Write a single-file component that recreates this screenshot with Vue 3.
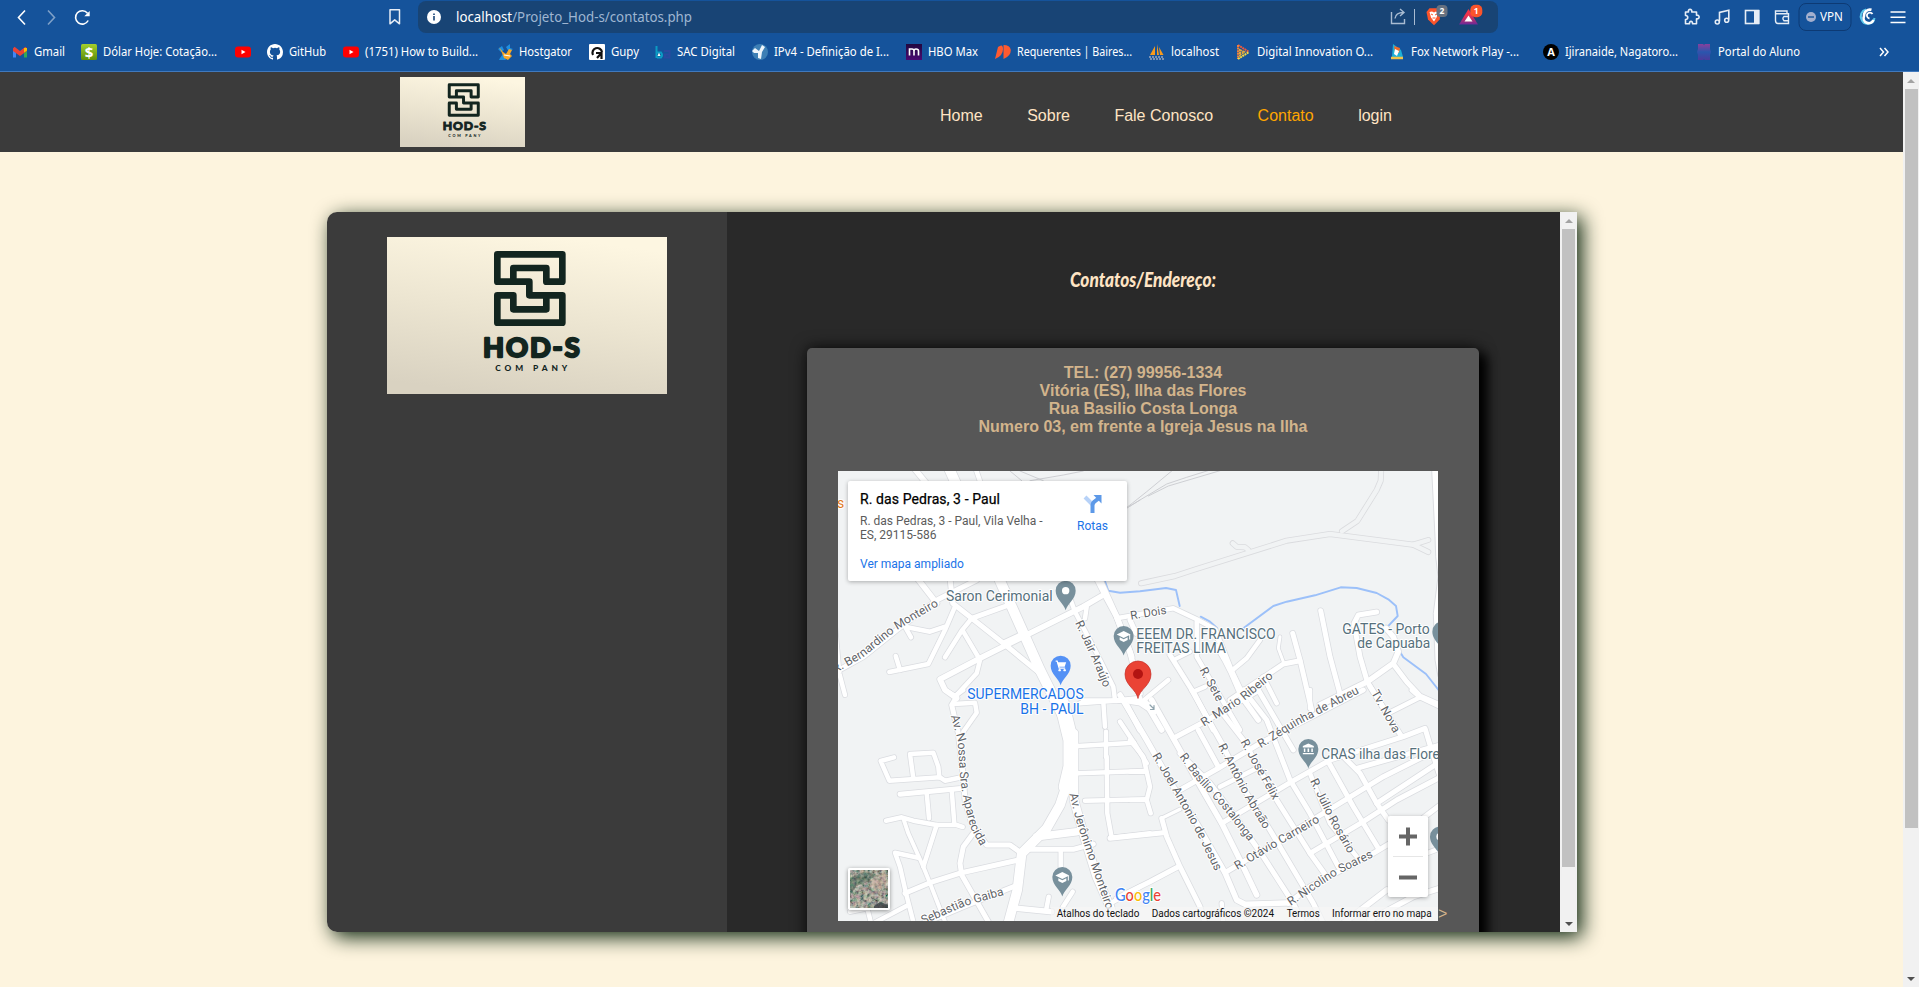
<script setup>
const bookmarks = [
  { icon: 'gmail', label: 'Gmail', w: 31, gap: 16 },
  { icon: 'dollar', label: 'Dólar Hoje: Cotação...', w: 114, gap: 18 },
  { icon: 'youtube', label: '', w: 0, gap: 16 },
  { icon: 'github', label: 'GitHub', w: 37, gap: 17 },
  { icon: 'youtube', label: '(1751) How to Build...', w: 113, gap: 19 },
  { icon: 'gator', label: 'Hostgator', w: 53, gap: 17 },
  { icon: 'gupy', label: 'Gupy', w: 28, gap: 16 },
  { icon: 'ba', label: 'SAC Digital', w: 58, gap: 17 },
  { icon: 'globe', label: 'IPv4 - Definição de I...', w: 115, gap: 17 },
  { icon: 'hbo', label: 'HBO Max', w: 50, gap: 17 },
  { icon: 'baires', label: 'Requerentes | Baires...', w: 115, gap: 17 },
  { icon: 'pma', label: 'localhost', w: 48, gap: 16 },
  { icon: 'dio', label: 'Digital Innovation O...', w: 116, gap: 16 },
  { icon: 'fox', label: 'Fox Network Play -...', w: 108, gap: 24 },
  { icon: 'aletter', label: 'Ijiranaide, Nagatoro...', w: 113, gap: 18 },
  { icon: 'portal', label: 'Portal do Aluno', w: 82, gap: 0 },
]

const nav = ['Home', 'Sobre', 'Fale Conosco', 'Contato', 'login']

// Map tiles: each is drawn at triple resolution and offset inside the 600x450 frame.
const tiles = { nw: [-8, -11], ne: [292, -11], sw: [-8, 219], se: [292, 219], c: [242, 109] }

function points(tile, list) {
  const [ox, oy] = tiles[tile]
  const n = list.trim().split(/[\s,]+/).map(Number)
  const out = []
  for (let i = 0; i < n.length; i += 2) out.push([n[i] / 3 + ox, n[i + 1] / 3 + oy])
  return out
}
const toPath = (pts) => 'M' + pts.map((p) => p.map((v) => v.toFixed(1)).join(' ')).join('L')
function length(pts) {
  let s = 0
  for (let i = 1; i < pts.length; i++) s += Math.hypot(pts[i][0] - pts[i - 1][0], pts[i][1] - pts[i - 1][1])
  return s
}

const roads = [
  // north west
  ['nw', 9.5, '355,20 510,362 545,440 630,630 700,770'],
  ['nw', 5, '240,10 330,120'],
  ['nw', 4, '435,20 452,70'],
  ['nw', 5, '262,355 320,430'],
  ['nw', 4.5, '10,640 100,590 200,510 325,418 440,360'],
  ['nw', 4.5, '360,355 368,430 425,475 520,550 630,640'],
  ['nw', 4, '375,440 345,510 295,612 178,636'],
  ['nw', 4, '210,630 197,588'],
  ['nw', 4, '345,500 300,515 225,500 243,532'],
  ['nw', 4.5, '425,475 545,432'],
  ['nw', 4, '425,475 395,512 345,592'],
  ['nw', 4, '400,515 450,600 440,640 375,710'],
  ['nw', 5, '380,715 345,690 330,658 450,595 600,520 760,440 825,402'],
  ['nw', 4, '520,548 570,525'],
  ['nw', 5, '800,355 830,415 860,470 905,590'],
  ['nw', 4, '720,415 735,455 800,580 850,680 855,720'],
  ['nw', 4, '770,440 765,475'],
  ['nw', 4, '15,500 28,640 45,705'],
  // centre
  ['c', 5, '60,0 110,110 150,215 180,340'],
  ['c', 4, '0,370 100,362 170,358 205,372 225,395'],
  ['c', 4, '190,362 265,300'],
  ['c', 5, '195,365 245,450'],
  ['c', 4, '110,115 280,85 350,118 400,145 412,175'],
  ['c', 4.5, '150,120 168,160'],
  ['c', 4.5, '270,225 345,345 400,450'],
  ['c', 3.5, '285,238 330,215'],
  ['c', 4, '340,335 375,320'],
  ['c', 4, '350,125 350,230 480,450'],
  ['c', 5, '405,150 455,275 500,370'],
  ['c', 5, '140,375 180,450'],
  // north east
  ['ne', 5, '262,560 285,600 305,640 335,710 385,780'],
  ['ne', 4, '305,632 350,595 390,540'],
  ['ne', 4.5, '488,520 510,600 545,750'],
  ['ne', 4.5, '510,602 460,612 300,720'],
  ['ne', 2.5, '450,530 445,565 460,605'],
  ['ne', 4, '400,650 440,730'],
  ['ne', 4.5, '572,452 600,590 635,720'],
  ['ne', 4.5, '740,456 685,465 672,490 690,590 712,665 770,760'],
  ['ne', 5, '570,735 712,665 790,610 805,575 790,530 768,505'],
  ['ne', 4.5, '790,612 830,665 870,708 930,735'],
  // south west
  ['sw', 14, '695,40 722,150 722,230 708,290'],
  ['sw', 9, '715,270 690,345 650,415 575,490 562,600 535,700'],
  ['sw', 4.5, '380,20 365,45 385,130 400,260 405,330 425,400 470,465 540,465 578,492'],
  ['sw', 4, '345,0 375,18 400,0'],
  ['sw', 4, '370,42 435,38 440,68 400,125'],
  ['sw', 4, '192,202 152,213 178,272 330,262 345,272 395,262'],
  ['sw', 4, '250,265 240,192 310,188 325,230 328,262'],
  ['sw', 4.5, '210,313 400,295'],
  ['sw', 4, '290,310 297,385'],
  ['sw', 4, '365,300 373,400'],
  ['sw', 4, '168,392 215,382 250,392 320,405 380,405 398,411'],
  ['sw', 3.5, '220,385 235,430 280,530 300,580 345,695'],
  ['sw', 4, '320,405 280,530'],
  ['sw', 4, '265,503 195,488 210,530 228,610 250,695'],
  ['sw', 4.5, '225,610 300,578 395,548 575,508'],
  ['sw', 4, '130,700 235,645'],
  ['sw', 4, '60,665 112,655 122,695'],
  ['sw', 4.5, '430,430 400,470 390,520 395,555 475,695'],
  ['sw', 4.5, '270,705 400,650 550,590'],
  ['sw', 7, '620,440 740,425'],
  ['sw', 4.5, '590,478 730,478 790,462'],
  ['sw', 4, '692,480 692,535'],
  ['sw', 5, '560,655 665,665'],
  ['sw', 4, '648,662 656,620'],
  ['sw', 4, '698,652 728,605'],
  ['sw', 8, '732,130 732,330 760,430 800,560 840,650 855,700'],
  ['sw', 4, '745,168 912,158'],
  ['sw', 4, '745,250 945,243'],
  ['sw', 4, '765,332 950,328'],
  ['sw', 4, '820,35 825,110'],
  ['sw', 4, '828,125 828,200'],
  ['sw', 4, '830,200 832,370 845,443 960,430'],
  ['sw', 4.5, '760,32 860,32 930,25'],
  ['sw', 4, '870,95 912,158 950,220'],
  ['sw', 4, '850,635 930,590'],
  // south east
  ['se', 5, '-30,15 50,150 130,290 200,400 285,548 320,630 345,643 490,638'],
  ['se', 4, '0,35 30,40 60,60'],
  ['se', 5, '65,30 130,145 200,270 275,400 330,510 380,615'],
  ['se', 4.5, '205,120 265,230'],
  ['se', 4, '0,150 40,200 60,290 50,330 62,370'],
  ['se', 4, '0,245 45,245'],
  ['se', 4, '0,330 50,330'],
  ['se', 3, '95,385 150,358'],
  ['se', 4.5, '-60,445 100,428'],
  ['se', 4.5, '95,385 110,440 150,530 210,650 225,700'],
  ['se', 4.5, '-40,625 60,575 145,530'],
  ['se', 4, '275,640 280,700'],
  ['se', 4.5, '130,145 215,100 380,5'],
  ['se', 4.5, '185,0 275,160 350,310 420,420 550,640 580,700'],
  ['se', 4.5, '150,190 240,280 330,400 400,500 490,640 520,700'],
  ['se', 4.5, '270,60 340,150 440,330 540,490 590,560'],
  ['se', 4.5, '340,0 410,90 480,270 540,370 625,530'],
  ['se', 4.5, '385,0 490,180'],
  ['se', 4, '540,250 600,400 680,500'],
  ['se', 4.5, '595,215 670,350 745,475'],
  ['se', 4.5, '645,205 690,250 740,340 775,390'],
  ['se', 4.5, '150,300 265,235 390,160 700,0'],
  ['se', 4.5, '275,400 485,275 600,210 820,140 885,115 900,165 930,260'],
  ['se', 4, '270,290 380,235'],
  ['se', 4.5, '680,235 930,165'],
  ['se', 4.5, '285,548 450,450 580,370 760,260 930,175'],
  ['se', 4.5, '540,490 700,395 800,330 930,262'],
  ['se', 4.5, '740,340 930,215'],
  ['se', 4.5, '475,640 540,590 730,490 780,460 930,345'],
  ['se', 4.5, '720,-10 815,140'],
  ['se', 4, '775,70 870,22 930,50'],
  ['se', 4, '845,0 870,22'],
  ['se', 4, '540,0 540,55'],
  ['se', 5, '640,700 770,600'],
  ['se', 5, '720,690 850,620 930,595'],
  ['se', 4, '890,490 930,475'],
].map(([t, w, d]) => ({ w: w + 0.5, d: toPath(points(t, d)) }))

const tracks = [
  ['ne', '33,370 135,348 190,330 470,242 600,222 850,254 895,240'],
  ['ne', '850,254 895,276'],
  ['ne', '636,214 682,183 740,90 752,62 754,20'],
  ['ne', '355,270 345,262 320,260 308,250'],
].map(([t, d]) => toPath(points(t, d)))

const rails = [
  ['ne', '-40,165 0,135 50,95 125,33'],
  ['ne', '0,138 60,102 110,72 170,52 240,30'],
  ['ne', '55,108 115,78 270,32'],
  ['nw', '540,33 575,62'],
  ['nw', '570,33 640,62'],
  ['nw', '600,62 700,45 760,33'],
  ['nw', '890,145 930,120'],
].map(([t, d]) => toPath(points(t, d)))

const rivers = [
  ['nw', '822,355 835,392 870,398 930,394 1008,384 1038,390 1049,438'],
  ['ne', '212,470 240,485 262,505'],
  ['ne', '340,505 430,438 470,425 555,406 632,382 680,384 740,399 775,418 798,438 803,468 768,505'],
  ['ne', '810,575 820,592 888,642 930,695'],
].map(([t, d]) => toPath(points(t, d)))

const coast = toPath(points('ne', '905,30 915,230 917,290 924,350 910,460 915,600 924,650 940,650 940,30')) + 'Z'

const streets = [
  ['nw', 'R. Bernardino Monteiro', '16,640 100,592 200,510 328,436'],
  ['nw', 'R. Jair Araújo', '735,488 790,605 822,685'],
  ['c', 'R. Dois', '153,119 262,101'],
  ['c', 'R. Sete', '358,270 412,368'],
  ['se', 'R. Mario Ribeiro', '222,110 340,35 432,-40'],
  ['se', 'R. Zéquinha de Abreu', '392,175 500,108 690,8'],
  ['se', 'Tv. Nova', '723,8 792,132'],
  ['sw', 'Av. Nossa Sra. Aparecida', '362,78 383,150 390,260 400,330 422,415 453,470'],
  ['sw', 'Av. Jerônimo Monteiro', '718,312 740,400 778,510 830,662'],
  ['sw', 'Sebastião Gaiba', '280,703 400,650 524,614'],
  ['se', 'R. Joel Antonio de Jesus', '66,197 130,305 200,430 256,545'],
  ['se', 'R. Basílio Costalonga', '148,200 200,270 275,350 358,456'],
  ['se', 'R. Antônio Abraão', '264,168 340,315 403,420'],
  ['se', 'R. José Félix', '331,156 430,333'],
  ['se', 'R. Otávio Carneiro', '322,540 440,470 572,394'],
  ['se', 'R. Júlio Rosário', '540,273 600,395 656,493'],
  ['se', 'R. Nicolino Soares', '482,648 560,595 620,555 732,500'],
].map(([t, text, d], i) => {
  const p = points(t, d)
  return { id: 'street' + i, text, d: toPath(p), len: length(p) - 0.5 }
})

const places = [
  ['nw', 'Saron Cerimonial', 348, 423, 320, '#56707c'],
  ['ne', 'EEEM DR. FRANCISCO', 19, 537, 418, '#56707c'],
  ['ne', 'FREITAS LIMA', 19, 579, 269, '#56707c'],
  ['ne', 'GATES - Porto', 637, 522, 262, '#56707c'],
  ['ne', 'de Capuaba', 682, 564, 219, '#56707c'],
  ['nw', 'SUPERMERCADOS', 412, 718, 349, '#1a73e8'],
  ['sw', 'BH - PAUL', 571, 72, 190, '#1a73e8'],
  ['se', 'CRAS ilha das Flores', 574, 206, 376, '#56707c'],
].map(([t, text, x, y, w, color]) => {
  const [[px, py]] = points(t, `${x},${y}`)
  return { text, x: px, y: py, w: w / 3, color }
})

const pins = [
  ['nw', 707, 392, 'dot'],
  ['nw', 881, 528, 'cap'],
  ['nw', 692, 617, 'cart'],
  ['ne', 937, 515, 'dot'],
  ['se', 535, 177, 'museum'],
  ['sw', 697, 561, 'cap'],
  ['se', 930, 440, 'dot'],
].map(([t, x, y, kind]) => {
  const [[px, py]] = points(t, `${x},${y}`)
  return { x: px, y: py, kind }
})

const legal = [
  { text: 'Atalhos do teclado', x: 218.7, w: 82.6 },
  { text: 'Dados cartográficos ©2024', x: 313.7, w: 122.3 },
  { text: 'Termos', x: 448.7, w: 33 },
  { text: 'Informar erro no mapa', x: 494, w: 99.6 },
]
</script>

<template>
  <div class="window">
    <svg class="defs" width="0" height="0">
      <defs>
        <linearGradient id="paper" x1="0.6" y1="0" x2="0.35" y2="1">
          <stop offset="0" stop-color="#fdf6e1" />
          <stop offset="0.5" stop-color="#ece5d1" />
          <stop offset="1" stop-color="#d9d2c1" />
        </linearGradient>
        <symbol id="brand" viewBox="0 0 840 471" preserveAspectRatio="none">
          <rect width="840" height="471" fill="url(#paper)" />
          <g transform="translate(-201 -111)" fill="none" stroke="#12251f" stroke-width="20" stroke-linejoin="round">
            <path d="M580 245V204H679V245H727V163H532V245H628V286H727V368H532V286H580V328H679V286" />
          </g>
          <text x="288" y="360" font-family="Lato, sans-serif" font-weight="700" font-size="82" textLength="290" fill="#12251f" stroke="#12251f" stroke-width="7" stroke-linejoin="round">HOD-S</text>
          <text x="325" y="402" font-family="Lato, sans-serif" font-weight="900" font-size="25" textLength="216" fill="#12251f">COM PANY</text>
        </symbol>
        <linearGradient id="dollarBg" x1="0" y1="0" x2="0" y2="1">
          <stop offset="0" stop-color="#a4cf2c" /><stop offset="1" stop-color="#5d8e08" />
        </linearGradient>
        <linearGradient id="hboBg" x1="0" y1="0" x2="0" y2="1">
          <stop offset="0" stop-color="#21083f" /><stop offset="1" stop-color="#4a0a72" />
        </linearGradient>
        <linearGradient id="portalBg" x1="0" y1="0" x2="0" y2="1">
          <stop offset="0" stop-color="#8a3f9c" /><stop offset="0.5" stop-color="#2a56ae" /><stop offset="1" stop-color="#4a3a9c" />
        </linearGradient>
        <linearGradient id="batBg" x1="0" y1="0" x2="0" y2="1">
          <stop offset="0.4" stop-color="#f0334a" /><stop offset="1" stop-color="#6b2a9a" />
        </linearGradient>
      </defs>
    </svg>

    <header class="chrome">
      <div class="toolbar">
        <svg class="back" width="80" height="32" viewBox="0 0 80 32" fill="none" stroke="#fff" stroke-width="1.6">
          <path d="M9 9.500L2.500 16.500L9 23.500" />
          <path d="M32 9.500L38.500 16.500L32 23.500" opacity=".45" />
          <path d="M71.500 12.200A6.700 6.700 0 1 0 72.200 19.500" />
          <path d="M73.700 10V15.200H68.300Z" fill="#fff" stroke="none" />
        </svg>
        <svg class="save" width="14" height="18" viewBox="0 0 14 18" fill="none" stroke="#e6edf6" stroke-width="1.5"><path d="M2 1.800H11.500V15.800L6.700 11.900L2 15.800Z" stroke-linejoin="round" /></svg>
        <div class="address">
          <svg class="info" width="14" height="14" viewBox="0 0 14 14"><circle cx="7" cy="7" r="7" fill="#fff" /><path d="M7 6V10.500M7 3.400V5" stroke="#184476" stroke-width="1.600" /></svg>
          <svg class="url" width="240" height="22" viewBox="0 0 240 22">
            <text x="0" y="16" textLength="236" lengthAdjust="spacingAndGlyphs"><tspan fill="#fff">localhost</tspan><tspan fill="#9fb6d2">/Projeto_Hod-s/contatos.php</tspan></text>
          </svg>
          <svg class="actions" width="110" height="32" viewBox="1386 0 110 32">
            <g fill="none" stroke="#a9bcd2" stroke-width="1.400"><path d="M1391.500 12V23.500H1404.500V19" /><path d="M1395 18.500C1395.500 14 1398 12.500 1403.500 12.500M1400 9L1404 12.500L1400 16" /></g>
            <path d="M1414.500 9V25" stroke="#a9bcd2" stroke-width="1" />
            <path d="M1429.500 8.300H1437.500L1440.500 11.500L1439.700 19.500L1434 25.300L1428 19.500L1426.500 12Z" fill="#fb542b" />
            <path d="M1429.500 12L1432 11.500L1434 12.500L1436 11.500L1438 13L1436.500 17.500L1434 21.500L1431 17.500Z" fill="#fff" />
            <path d="M1431 14L1433 15M1437 14L1435 15M1432.500 18H1435.500" stroke="#fb542b" stroke-width="1" />
            <rect x="1436.500" y="5" width="11" height="12" rx="4" fill="#667180" />
            <text x="1442" y="14" class="tiny">2</text>
            <path d="M1468.500 9L1478 24.500H1459Z" fill="url(#batBg)" />
            <path d="M1468.500 15.500L1472.500 21.500H1464.500Z" fill="#fff" />
            <rect x="1470.300" y="4.700" width="12" height="12.600" rx="5" fill="#fb542b" />
            <text x="1476.300" y="14" class="tiny">1</text>
          </svg>
        </div>
        <svg class="tools" width="230" height="34" viewBox="1683 0 230 34" fill="none" stroke="#e6edf6" stroke-width="1.600">
          <path d="M1685.500 12H1688.500C1687.500 8.500 1692.500 8.500 1691.800 12H1696.500V15.200C1700 14.500 1700 19.500 1696.500 18.800V23.800H1692.500C1693 20.500 1689 20.500 1689.500 23.800H1685.500V19.500C1688.500 19.500 1688.500 15.500 1685.500 15.500Z" stroke-linejoin="round" />
          <path d="M1719.500 21.500V12.500L1728.800 10.200V19.500" />
          <circle cx="1717.300" cy="22" r="2" /><circle cx="1726.700" cy="20.300" r="2" />
          <rect x="1745.500" y="10.500" width="13" height="13" /><rect x="1754" y="10" width="5.500" height="14" fill="#e6edf6" stroke="none" />
          <path d="M1787 13.500V11H1775.500V20.500Q1775.500 23.500 1778 23.500H1788.500V13.800H1775.500M1788.500 16.500H1784Q1781.800 18.500 1784 20.800H1788.500" stroke-width="1.400" />
          <rect x="1799" y="3.500" width="52" height="27" rx="7" stroke="#0d3a74" stroke-width="1" />
          <circle cx="1811" cy="17" r="5" fill="#a3afce" stroke="none" /><path d="M1808 17H1814" stroke="#15539b" stroke-width="1.400" />
          <text x="1820" y="21" class="vpn" textLength="23" lengthAdjust="spacingAndGlyphs">VPN</text>
          <path d="M1874.500 18A6.800 6.800 0 0 1 1861.500 19.500A7 7 0 0 1 1866 9.500" stroke="#5bc8ec" stroke-width="2" />
          <path d="M1871.500 9.800A6 6 0 0 0 1864 16A5 5 0 0 0 1873.500 20" stroke="#fff" stroke-width="2.600" />
          <path d="M1872.500 14A3 3 0 1 0 1869.500 18.500" stroke="#fff" stroke-width="1.800" />
          <path d="M1890.500 12H1905.500M1890.500 17.300H1905.500M1890.500 22.600H1905.500" stroke="#fff" stroke-width="1.500" />
        </svg>
      </div>
      <ul class="bookmarks">
        <li v-for="(b, i) in bookmarks" :key="i" :style="{ marginRight: b.gap + 'px' }">
          <svg class="fav" width="16" height="16" viewBox="0 0 16 16">
            <g v-if="b.icon === 'gmail'">
              <path d="M1 4V13.500H4V7Z" fill="#4285f4" /><path d="M15 4V13.500H12V7Z" fill="#34a853" />
              <path d="M1 4.500L2.500 2.800L8 7L13.500 2.800L15 4.500V7L8 12L1 7Z" fill="#ea4335" /><path d="M12 4V8.500L15 6.500V4Z" fill="#fbbc04" />
            </g>
            <g v-else-if="b.icon === 'dollar'"><rect width="16" height="16" rx="1.500" fill="url(#dollarBg)" /><text x="8" y="13.500" class="glyph big">$</text></g>
            <g v-else-if="b.icon === 'youtube'"><rect y="2.500" width="16" height="11" rx="3" fill="#f00" /><path d="M6.500 5.800L10.500 8L6.500 10.200Z" fill="#fff" /></g>
            <path v-else-if="b.icon === 'github'" fill="#fff" d="M8 0C3.580 0 0 3.580 0 8c0 3.540 2.290 6.530 5.470 7.590.4.070.55-.17.55-.38v-1.490c-2.230.49-2.700-.94-2.700-.94-.36-.92-.89-1.170-.89-1.170-.73-.5.060-.49.060-.49.8.060 1.230.82 1.230.82.71 1.220 1.870.87 2.330.67.070-.52.28-.87.51-1.070-1.780-.2-3.640-.89-3.640-3.950 0-.87.31-1.590.82-2.150-.08-.2-.36-1.020.08-2.120 0 0 .67-.21 2.200.82a7.600 7.600 0 0 1 4 0c1.530-1.040 2.200-.82 2.200-.82.44 1.100.16 1.920.08 2.120.51.56.82 1.270.82 2.150 0 3.070-1.870 3.750-3.650 3.950.29.25.54.73.54 1.480v2.200c0 .21.150.46.550.38A8 8 0 0 0 16 8c0-4.420-3.580-8-8-8z" />
            <g v-else-if="b.icon === 'gator'">
              <path d="M1 5L5 2L7 6L4 8ZM9 3L13 0V4L16 5L12 8ZM3 14L6 10L9 16H2Z" fill="#1f8fe0" />
              <path d="M2 3L6 8L9 10L12 5L15 6L13 10L15 12L11 16L7 14L5 9Z" fill="#f9a825" /><path d="M7 11L13 12" stroke="#fff" />
            </g>
            <g v-else-if="b.icon === 'gupy'"><rect width="16" height="16" rx="1" fill="#fff" /><path d="M4 11A4.800 4.800 0 1 1 13 8M7 9H12.500V15M12.500 9L8 14" fill="none" stroke="#111" stroke-width="2.200" /></g>
            <g v-else-if="b.icon === 'ba'"><path d="M1.500 2V14M2 8.500H6Q8 11 6 13.500H2" fill="none" stroke="#0b9cc4" stroke-width="2" /><path d="M9 7H14.500V13.500H10V10.500H14" fill="none" stroke="#2b4aa0" stroke-width="2" /><path d="M4 8.500L5.500 12H2.500Z" fill="#fff" /></g>
            <g v-else-if="b.icon === 'globe'"><circle cx="8" cy="8" r="8" fill="#3d7fb5" /><path d="M0 7L3 4L7 7L10 1L13 3L10 8L9 15L6 14L6 9L2 9Z" fill="#eef5fb" /></g>
            <g v-else-if="b.icon === 'hbo'"><rect width="16" height="16" fill="url(#hboBg)" /><path d="M3.500 11.500V5H6Q8 5 8 7V11.500M8 7Q8 5 10 5Q12.500 5 12.500 7V11.500" fill="none" stroke="#fff" stroke-width="1.600" /></g>
            <g v-else-if="b.icon === 'baires'" fill="#ff5a30"><path d="M0 15L3 3Q8 -1 8 5Q8 12 0 15Z" /><path d="M8.500 15V1Q15 1 15.800 6Q16 12 8.500 15Z" /></g>
            <g v-else-if="b.icon === 'pma'"><path d="M6 2L1 11H6ZM8 0V11H10ZM10 3L14.500 11H11Z" fill="#f79a1c" /><path d="M0 13H15M1 15H15" stroke="#9aa6bd" stroke-width="1.600" stroke-dasharray="2 1" /></g>
            <g v-else-if="b.icon === 'dio'" fill="none" stroke-width="2" stroke-dasharray="2 .6"><path d="M3 1L14 8" stroke="#f05a3c" /><path d="M3 1V15" stroke="#f0803c" /><path d="M3 15L14 8" stroke="#f5d742" /><path d="M5 6L9 8L5 11Z" stroke="#e6a93a" /></g>
            <g v-else-if="b.icon === 'fox'"><path d="M4 0L12 6L14 13H3Z" fill="#1eb0d8" /><path d="M5 2L11 4L10 9L6 8Z" fill="#f06a2a" /><path d="M6 5L10 7L8 12L5 10Z" fill="#fff" /><path d="M2 14H14" stroke="#f0c34a" stroke-width="2.500" /></g>
            <g v-else-if="b.icon === 'aletter'"><circle cx="8" cy="8" r="8" fill="#000" /><text x="8" y="12" class="glyph">A</text></g>
            <path v-else d="M2 0H7L8 1L9 0H14V5L15 8L14 11V16H9L8 15L7 16H2V11L1 8L2 5Z" fill="url(#portalBg)" />
          </svg>
          <svg v-if="b.label" class="label" :width="b.w" height="20"><text x="0" y="14" :textLength="b.w" lengthAdjust="spacingAndGlyphs">{{ b.label }}</text></svg>
        </li>
        <li class="more"><svg width="10" height="10" viewBox="0 0 10 10" fill="none" stroke="#fff" stroke-width="1.500"><path d="M1 1L4.500 5L1 9M5.500 1L9 5L5.500 9" /></svg></li>
      </ul>
    </header>

    <div class="viewport">
      <div class="page">
        <nav class="topbar">
          <svg class="brand-small" width="125" height="70"><use href="#brand" width="125" height="70" /></svg>
          <ul class="menu">
            <li v-for="item in nav" :key="item" :class="{ active: item === 'Contato' }">{{ item }}</li>
          </ul>
        </nav>

        <main class="panel">
          <aside class="side">
            <svg width="280" height="157"><use href="#brand" width="280" height="157" /></svg>
          </aside>
          <section class="content">
            <h1><svg width="150" height="34"><text x="2" y="23" textLength="146" lengthAdjust="spacingAndGlyphs">Contatos/Endereço:</text></svg></h1>
            <div class="card">
              <p class="info-lines">TEL: (27) 99956-1334<br />Vitória (ES), Ilha das Flores<br />Rua Basilio Costa Longa<br />Numero 03, em frente a Igreja Jesus na Ilha</p>
              <div class="map-row">
                <div class="map">
                  <svg width="600" height="450" viewBox="0 0 600 450">
                    <rect width="600" height="450" fill="#f1f3f4" />
                    <g fill="none" stroke-linejoin="round" stroke-linecap="round">
                      <path :d="coast" fill="#fff" stroke="#dcdde1" stroke-width="1" />
                      <path v-for="(r, i) in rails" :key="'l' + i" :d="r" stroke="#c9cbcf" stroke-width=".9" />
                      <path v-for="(t, i) in tracks" :key="'to' + i" :d="t" stroke="#dadbde" stroke-width="6" />
                      <path v-for="(t, i) in tracks" :key="'ti' + i" :d="t" stroke="#f1f3f4" stroke-width="4.400" />
                      <path v-for="(r, i) in rivers" :key="'w' + i" :d="r" stroke="#9cc0f9" stroke-width="1.900" />
                      <path v-for="(r, i) in roads" :key="'o' + i" :d="r.d" stroke="#dadce0" :stroke-width="r.w + 1.5" />
                      <path v-for="(r, i) in roads" :key="'f' + i" :d="r.d" stroke="#fff" :stroke-width="r.w" />
                      <path d="M312 234L316 238M316 234.500V238.500H312.500" stroke="#90a4ae" stroke-width="1.200" />
                    </g>
                    <g class="street">
                      <template v-for="s in streets" :key="s.id">
                        <path :id="s.id" :d="s.d" fill="none" stroke="none" />
                        <text><textPath :href="'#' + s.id" :textLength="s.len" lengthAdjust="spacingAndGlyphs">{{ s.text }}</textPath></text>
                      </template>
                    </g>
                    <g v-for="(p, i) in pins" :key="'p' + i" :transform="`translate(${p.x} ${p.y})`">
                      <path d="M0 19.500C-1.500 13-10 8.500-10 0A10 10 0 0 1 10 0C10 8.500 1.500 13 0 19.500Z" :fill="p.kind === 'cart' ? '#5491f5' : '#78909c'" />
                      <circle v-if="p.kind === 'dot'" r="3.700" fill="#fff" />
                      <g v-else-if="p.kind === 'cap'" fill="#fff"><path d="M0-5L7-1.500L0 2L-7-1.500Z" /><path d="M-4 1.300L0 3.300L4 1.300V4L0 6L-4 4Z" /><path d="M5.500-1H6.500V3.500H5.500Z" /></g>
                      <g v-else-if="p.kind === 'cart'"><path d="M-5-4.500H-3.500L-1.500 2.500H4.500" fill="none" stroke="#fff" stroke-width="1.200" /><path d="M-3.500-3.500H5.500L4 1H-2Z" fill="#fff" /><circle cx="-1" cy="4.500" r="1.200" fill="#fff" /><circle cx="4" cy="4.500" r="1.200" fill="#fff" /></g>
                      <g v-else fill="#fff"><path d="M0-5.500L5.500-3V-1.500H-5.500V-3Z" /><path d="M-4.500-.5H-3V3H-4.500ZM-.8-.5H.8V3H-.8ZM3-.5H4.500V3H3ZM-5.500 4H5.500V5.300H-5.500Z" /></g>
                    </g>
                    <g transform="translate(300 203)">
                      <path d="M0 24.500C-1.800 15-13 11.500-13 0A13 13 0 0 1 13 0C13 11.500 1.800 15 0 24.500Z" fill="#ea4335" stroke="#c5302a" stroke-width=".7" />
                      <circle r="5" fill="#b31412" />
                    </g>
                    <g class="place">
                      <text v-for="p in places" :key="p.text" :x="p.x" :y="p.y" :textLength="p.w" lengthAdjust="spacingAndGlyphs" :fill="p.color">{{ p.text }}</text>
                      <text x="-1" y="36.700" fill="#e07a1c">s</text>
                    </g>
                    <text class="google" x="277" y="429.500" textLength="46" lengthAdjust="spacingAndGlyphs"><tspan fill="#4285f4">G</tspan><tspan fill="#ea4335">o</tspan><tspan fill="#fbbc04">o</tspan><tspan fill="#4285f4">g</tspan><tspan fill="#34a853">l</tspan><tspan fill="#ea4335">e</tspan></text>
                    <rect x="213" y="436" width="387" height="14" fill="#f5f5f5" opacity=".75" />
                    <g class="legal"><text v-for="l in legal" :key="l.text" :x="l.x" y="446.300" :textLength="l.w" lengthAdjust="spacingAndGlyphs">{{ l.text }}</text></g>
                  </svg>
                  <div class="place-card">
                    <div class="place-text">
                      <strong>R. das Pedras, 3 - Paul</strong>
                      <span>R. das Pedras, 3 - Paul, Vila Velha -<br />ES, 29115-586</span>
                      <a>Ver mapa ampliado</a>
                    </div>
                    <div class="routes">
                      <svg width="20" height="20" viewBox="0 0 20 20"><path d="M2 3L9.500 10.500" stroke="#b7d2f8" stroke-width="4" /><path d="M9.500 19V11.500Q9.500 9.500 11 8L15.500 4.500" fill="none" stroke="#5d99e8" stroke-width="4" /><path d="M10.500 1H18.500V9.500Z" fill="#5d99e8" /></svg>
                      <span>Rotas</span>
                    </div>
                  </div>
                  <div class="satellite">
                    <svg width="38" height="38" viewBox="0 0 38 38">
                      <filter id="terrain" x="0" y="0" width="1" height="1"><feTurbulence type="fractalNoise" baseFrequency=".28" numOctaves="3" seed="4" /><feColorMatrix values=".9 .3 0 0 -.26  .6 .6 0 0 -.26  .5 .4 .2 0 -.26  0 0 0 0 1" /></filter>
                      <rect width="38" height="38" filter="url(#terrain)" />
                      <path d="M0 8L14 2L26 4L18 12L6 16L0 26Z" fill="#2f5a43" opacity=".4" /><path d="M20 10L36 4V18L24 20Z" fill="#d9b3a1" opacity=".4" /><path d="M24 36L30 32L38 35V38H24Z" fill="#2a3038" opacity=".7" />
                    </svg>
                  </div>
                  <div class="zoom">
                    <svg width="40" height="81" viewBox="0 0 40 81"><path d="M11 20.500H29M20 11.500V29.500M11 61.500H29" stroke="#666" stroke-width="4" /><path d="M5 40.500H35" stroke="#e6e6e6" /></svg>
                  </div>
                </div>
                <span class="stray">&gt;</span>
              </div>
            </div>
          </section>
          <div class="bar inner-bar">
            <i class="up"></i><b></b><i class="down"></i>
          </div>
        </main>
      </div>
      <div class="bar outer-bar">
        <i class="up"></i><b></b><i class="down"></i>
      </div>
    </div>
  </div>
</template>

<style>
html, body { margin: 0; overflow: hidden; background: #fdf4de; }
</style>

<style scoped>
.window { width: 1919px; height: 987px; overflow: hidden; display: flex; flex-direction: column; font-family: "Liberation Sans", Arial, sans-serif; }
.defs { position: absolute; }
svg { display: block; flex: none; }
ul { list-style: none; margin: 0; padding: 0; }

.chrome { height: 71px; background: #15539b; border-bottom: 1px solid #4079bd; flex: none; }
.toolbar { display: flex; align-items: flex-start; height: 34px; }
.back { margin-left: 16px; margin-top: 1px; }
.save { margin-left: 292px; margin-top: 8px; }
.address { display: flex; align-items: center; width: 1080px; height: 32px; margin: 1px 0 0 16px; background: #184475; border-radius: 8px; flex: none; }
.info { margin-left: 9px; }
.url { margin-left: 15px; font: 14px "Noto Sans", "Open Sans", sans-serif; overflow: visible; }
.actions { margin-left: 690px; margin-top: -2px; }
.tools { margin-left: 185px; }
.tiny { font: 700 8.500px "Noto Sans", sans-serif; fill: #fff; text-anchor: middle; }
.vpn { font: 12.500px "Noto Sans", sans-serif; fill: #fff; stroke: none; }
.bookmarks { display: flex; align-items: center; height: 36px; padding-left: 12px; }
.bookmarks li { display: flex; align-items: center; gap: 6px; }
.label { font: 12px "Noto Sans", "Open Sans", sans-serif; fill: #fff; overflow: visible; }
.glyph { font: 700 11px "Open Sans", sans-serif; fill: #fff; text-anchor: middle; }
.glyph.big { font-size: 15px; }
.bookmarks .more { margin-left: auto; margin-right: 30px; }

.viewport { flex: 1; display: flex; min-height: 0; }
.page { flex: 1; background: #fdf4de; }
.topbar { display: flex; align-items: center; height: 80px; padding-left: 400px; background: #3b3b3b; }
.menu { display: flex; gap: 44.500px; margin-left: 415px; padding-top: 8px; font-size: 16px; color: #ffe4c4; }
.menu .active { color: #ffa500; }

.panel { display: flex; width: 1250px; height: 720px; margin: 60px 0 0 327px; border-radius: 10px 0 0 10px; box-shadow: 5px 5px 20px #0b250e; }
.side { width: 400px; flex: none; background: #3b3b3b; border-radius: 10px 0 0 10px; padding: 25px 0 0 60px; box-sizing: border-box; }
.content { flex: 1; display: flex; flex-direction: column; align-items: flex-start; padding-left: 80px; background: #292929; overflow: hidden; }
h1 { align-self: flex-start; margin: 52px 0 0 261px; height: 84px; flex: none; font: italic 900 20px Lato, sans-serif; fill: #ffe4c4; }
h1 svg { overflow: visible; }
.card { width: 672px; height: 640px; flex: none; background: #575757; border-radius: 5px; box-shadow: 8px 6px 12px #000, 0 0 16px rgba(0, 0, 0, .75); color: #d2b48c; }
.info-lines { margin: 16px 0 0; font: 700 16px/18px "Liberation Sans", Arial, sans-serif; text-align: center; }
.map-row { display: flex; align-items: flex-end; margin: 35px 0 0 31px; }
.stray { font-size: 16px; line-height: 14px; }
.map { position: relative; width: 600px; height: 450px; flex: none; overflow: hidden; font-family: Roboto, sans-serif; }
.street { font-size: 12px; font-weight: 400; fill: #5f6469; stroke: #fff; stroke-width: 2px; paint-order: stroke; stroke-linejoin: round; }
.place { font-size: 14px; stroke: #fff; stroke-width: 2px; paint-order: stroke; stroke-linejoin: round; }
.google { font: 500 17.500px Lato, sans-serif; stroke: #fff; stroke-width: 2px; paint-order: stroke; }
.legal { font-size: 10px; fill: #111; }
.place-card { position: absolute; left: 10px; top: 10px; width: 279px; height: 100px; background: #fff; border-radius: 2px; box-shadow: 0 1px 4px rgba(0, 0, 0, .3); display: flex; justify-content: space-between; box-sizing: border-box; padding: 9px 19px 0 12px; }
.place-text { display: flex; flex-direction: column; white-space: nowrap; font-size: 12px; line-height: 14px; color: #5b5b5b; }
.place-text strong { font-size: 14px; line-height: 18px; font-weight: 400; letter-spacing: .1px; color: #000; -webkit-text-stroke: .25px #000; margin-bottom: 6px; }
.place-text a { margin-top: 15px; color: #1a73e8; }
.routes { display: flex; flex-direction: column; align-items: center; gap: 5px; padding-top: 4px; font-size: 12px; line-height: 14px; color: #1a73e8; }
.satellite { position: absolute; left: 10px; top: 397px; border: 2px solid #fff; border-radius: 2px; box-shadow: 0 1px 4px rgba(0, 0, 0, .4); }
.zoom { position: absolute; left: 550px; top: 345px; width: 40px; height: 81px; background: #fff; border-radius: 2px; box-shadow: 0 1px 4px rgba(0, 0, 0, .3); }

.bar { display: flex; flex-direction: column; align-items: center; flex: none; background: #f1f1f1; }
.bar b { width: 13px; background: #c1c1c1; }
.bar i { border: 4px solid transparent; }
.bar .up { border-top: 0; border-bottom-color: #a3a3a3; margin: 7px 0 6px; }
.bar .down { border-bottom: 0; border-top-color: #505050; margin: auto 0 6px; }
.inner-bar { width: 17px; }
.inner-bar b { height: 638px; }
.outer-bar { width: 16px; }
.outer-bar b { height: 739px; }
</style>
